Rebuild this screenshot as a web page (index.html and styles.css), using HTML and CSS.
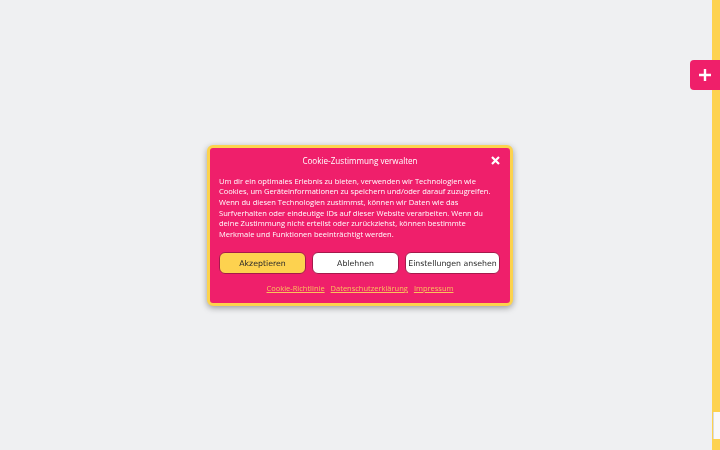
FILE: index.html
```html
<!DOCTYPE html>
<html lang="de">
<head>
<meta charset="utf-8">
<title>Cookie</title>
<link rel="stylesheet" href="styles.css">
</head>
<body>
<div class="side-bar"><div class="side-gap"></div></div>
<button class="plus-btn" aria-label="Öffnen">
  <svg width="14" height="14" viewBox="0 0 14 14"><path d="M7 1v12M1 7h12" stroke="#fff" stroke-width="2.4" stroke-linecap="butt"/></svg>
</button>
<div class="overlay">
  <div class="modal">
    <div class="modal-head">
      <div class="title">Cookie-Zustimmung verwalten</div>
      <button class="close" aria-label="Schließen">
        <svg width="9" height="9" viewBox="0 0 9 9"><path d="M1 1l7 7M8 1L1 8" stroke="#fff" stroke-width="2.2"/></svg>
      </button>
    </div>
    <p class="text">Um dir ein optimales Erlebnis zu bieten, verwenden wir Technologien wie<br>Cookies, um Geräteinformationen zu speichern und/oder darauf zuzugreifen.<br>Wenn du diesen Technologien zustimmst, können wir Daten wie das<br>Surfverhalten oder eindeutige IDs auf dieser Website verarbeiten. Wenn du<br>deine Zustimmung nicht erteilst oder zurückziehst, können bestimmte<br>Merkmale und Funktionen beeinträchtigt werden.</p>
    <div class="buttons">
      <button class="btn accept">Akzeptieren</button>
      <button class="btn">Ablehnen</button>
      <button class="btn">Einstellungen ansehen</button>
    </div>
    <div class="links">
      <a href="#">Cookie-Richtlinie</a>
      <a href="#">Datenschutzerklärung</a>
      <a href="#">Impressum</a>
    </div>
  </div>
</div>
</body>
</html>
```
FILE: styles.css
```css
html, body {
  margin: 0;
  padding: 0;
  height: 100%;
}
body {
  background: #eff0f2;
  font-family: "Open Sans", "Noto Sans", sans-serif;
  overflow: hidden;
}
.side-bar {
  position: fixed;
  top: 0;
  right: 0;
  width: 8px;
  height: 100%;
  background: #fdd24f;
}
.side-gap {
  position: absolute;
  top: 412px;
  left: 1px;
  right: 0;
  height: 27px;
  background: #f9f9fa;
  border-left: 1px solid #d9dadc;
}
.plus-btn {
  position: fixed;
  top: 60px;
  right: 0;
  width: 30px;
  height: 30px;
  border: 0;
  padding: 0;
  background: #ef1f6a;
  border-radius: 4px 0 0 4px;
  display: flex;
  align-items: center;
  justify-content: center;
}
.overlay {
  position: fixed;
  inset: 0;
  display: flex;
  align-items: center;
  justify-content: center;
}
.modal {
  width: 282px;
  background: #ef1f6b;
  border: 3px solid #fcd34d;
  border-radius: 6px;
  box-shadow: 0 2px 6px rgba(0,0,0,0.35);
  padding: 5px 9px 10px 9px;
  color: #fff;
  box-sizing: content-box;
  margin-top: 1px;
}
.modal-head {
  position: relative;
  display: flex;
  justify-content: center;
  align-items: center;
  height: 15px;
}
.title {
  font-size: 8.1px;
}
.close {
  position: absolute;
  right: 1px;
  top: 3px;
  border: 0;
  background: none;
  padding: 0;
  display: flex;
}
.text {
  margin: 8px 0 0 0;
  font-size: 7.55px;
  line-height: 10.6px;
  white-space: nowrap;
}
.buttons {
  display: grid;
  grid-template-columns: 87px 87px 95px;
  gap: 6px;
  margin-top: 13px;
}
.btn {
  height: 22px;
  border-radius: 6px;
  border: 1px solid #a51a4b;
  background: #fff;
  color: #2a2a2a;
  font-family: "DejaVu Sans", sans-serif;
  font-size: 7.8px;
  padding: 0;
}
.btn.accept {
  background: #fdd24f;
}
.links {
  display: flex;
  justify-content: center;
  gap: 6px;
  margin-top: 9px;
  font-size: 7.5px;
}
.links a {
  color: #f9c35b;
  text-decoration: underline;
}
```
